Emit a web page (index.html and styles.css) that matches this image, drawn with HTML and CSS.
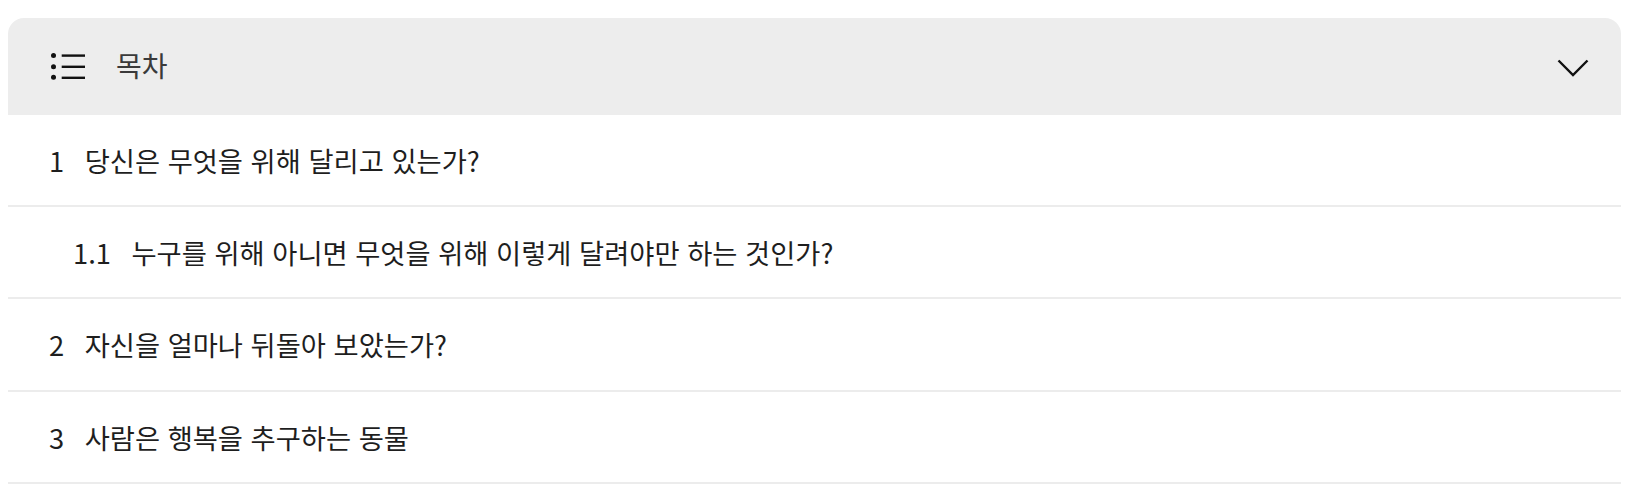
FILE: index.html
```html
<!DOCTYPE html>
<html lang="ko">
<head>
<meta charset="utf-8">
<link rel="stylesheet" href="styles.css">
</head>
<body>
<nav class="toc">
  <div class="toc-header">
    <svg class="toc-icon" width="34" height="27" viewBox="0 0 34 27">
      <circle cx="2.5" cy="2.5" r="2.5" fill="#111"/>
      <circle cx="2.5" cy="13.8" r="2.5" fill="#111"/>
      <circle cx="2.5" cy="24.3" r="2.5" fill="#111"/>
      <rect x="10.7" y="1.4" width="23.3" height="2.4" fill="#111"/>
      <rect x="10.7" y="12.6" width="23.3" height="2.4" fill="#111"/>
      <rect x="10.7" y="23.6" width="23.3" height="2.4" fill="#111"/>
    </svg>
    <span class="toc-title">목차</span>
    <svg class="toc-chevron" width="32" height="18" viewBox="0 0 32 18">
      <polyline points="1.5,1.5 16,16 30.5,1.5" fill="none" stroke="#111" stroke-width="2.4"/>
    </svg>
  </div>
  <ul class="toc-list">
    <li class="toc-item"><span class="num">1</span><span class="label">당신은 무엇을 위해 달리고 있는가?</span></li>
    <li class="toc-item sub"><span class="num">1.1</span><span class="label">누구를 위해 아니면 무엇을 위해 이렇게 달려야만 하는 것인가?</span></li>
    <li class="toc-item"><span class="num">2</span><span class="label">자신을 얼마나 뒤돌아 보았는가?</span></li>
    <li class="toc-item"><span class="num">3</span><span class="label">사람은 행복을 추구하는 동물</span></li>
  </ul>
</nav>
</body>
</html>
```

FILE: styles.css
```css
html, body {
  background: #fff;
}
body {
  margin: 8px;
  padding-top: 10px;
  font-family: "Noto Sans CJK KR", "Noto Sans", sans-serif;
  color: #222;
}
.toc {
  margin-right: 5px;
}
.toc-header {
  display: flex;
  align-items: center;
  height: 96.5px;
  padding: 0 32px 0 43px;
  background: #ededed;
  border-radius: 16px 16px 0 0;
}
.toc-icon {
  flex: none;
  margin-top: 0;
}
.toc-title {
  margin-left: 31px;
  font-size: 28px;
  color: #3a3a3a;
  flex: 1;
  margin-top: -3px;
}
.toc-chevron {
  flex: none;
  margin-top: 4px;
}
.toc-list {
  list-style: none;
  margin: 0;
  padding: 0;
}
.toc-item {
  display: flex;
  align-items: center;
  height: 90.4px;
  padding-left: 41px;
  border-bottom: 2px solid #ececec;
  font-size: 27.3px;
  color: #1e1e1e;
}
.toc-item.sub {
  padding-left: 65px;
}
.num {
  margin-right: 20.5px;
}
```
